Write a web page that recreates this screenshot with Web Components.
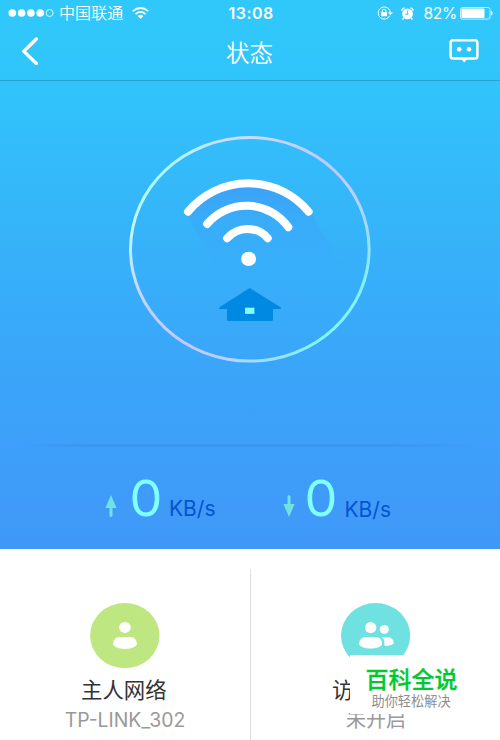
<!DOCTYPE html>
<html lang="zh-CN">
<head>
<meta charset="utf-8">
<title>状态</title>
<style>
body{margin:0;width:500px;height:740px;overflow:hidden;background:#fff;font-family:Inter,"Noto Sans CJK SC",sans-serif}
</style>
</head>
<body>
<router-app></router-app>
<script>
const define = (name, html) => customElements.define(name, class extends HTMLElement {
  constructor() {
    super();
    this.attachShadow({mode: 'open'}).innerHTML = html;
  }
});

define('status-bar', `
<style>
:host{display:grid;grid-template-columns:1fr 46px 1fr;height:26px;align-items:center;color:#fff;font-size:16px;line-height:26px;box-sizing:border-box;padding:0 7px 0 8px}
svg{display:block;flex:none}
.left,.right{display:flex;align-items:center;height:26px;white-space:nowrap}
.right{justify-content:flex-end}
.time{font-weight:600;font-size:16px;letter-spacing:.5px;text-align:center;white-space:nowrap;padding-left:1px}
.carrier{margin-left:5px;font-weight:350;letter-spacing:.1px}
.pct{font-size:15.6px;font-weight:400;margin:0 3px 0 9px;padding-top:1px;letter-spacing:-.3px}
</style>
<div class="left">
 <svg width="46" height="10" viewBox="0 0 46 10" fill="#fff"><circle cx="4.3" cy="5" r="3.8"/><circle cx="13.6" cy="5" r="3.8"/><circle cx="22.9" cy="5" r="3.8"/><circle cx="32.2" cy="5" r="3.8"/><circle cx="41.6" cy="5" r="3.5" fill="none" stroke="#fff" stroke-width=".8"/></svg>
 <span class="carrier">中国联通</span>
 <svg style="margin-left:8.5px" width="17" height="12" viewBox="0 0 17 12" fill="none" stroke="#fff" stroke-width="1.7"><path d="M.8 4.2Q8.5-2.2 16.2 4.2M3.5 7.1Q8.5 2.7 13.5 7.1"/><path d="M5.6 9Q8.5 6.4 11.4 9L8.5 11.7Z" fill="#fff" stroke="none"/></svg>
</div>
<div class="time">13:08</div>
<div class="right">
 <svg width="16" height="14" viewBox="0 0 16 14"><path d="M12.8 9.7A6.1 6.1 0 1 1 12.9 4.6L13.2 7.2" fill="none" stroke="#fff" stroke-width="1"/><path d="M10.9 6.6H16L13.4 9.1Z" fill="#fff"/><rect x="4.2" y="6.1" width="5.8" height="4.2" rx=".5" fill="#fff"/><path d="M5.3 6.5V5.1a1.8 1.8 0 0 1 3.6 0v1.4" fill="none" stroke="#fff" stroke-width="1"/></svg>
 <svg style="margin-left:8px" width="13" height="13" viewBox="0 0 13 13"><circle cx="6.5" cy="6.9" r="5.4" fill="#fff"/><path d="M.7 3.6A4 4 0 0 1 3.5.9M12.3 3.6A4 4 0 0 0 9.5.9M2.8 11.1 1.5 12.5M10.2 11.1l1.3 1.4" stroke="#fff" stroke-width="1.5" fill="none"/><path d="M6.7 3.7v3.6H4.2" fill="none" stroke="#30c5fa" stroke-width="1"/></svg>
 <span class="pct">82%</span>
 <svg width="33" height="13" viewBox="0 0 33 13"><rect x=".5" y=".5" width="29.5" height="11.6" rx="2" fill="none" stroke="#fff" stroke-width=".9" opacity=".85"/><rect x="1.5" y="1.5" width="23" height="9.6" rx="1" fill="#fff"/><path d="M31 4.1Q33 4.6 32.5 6.4Q32.4 8.1 31 8.5Z" fill="#fff"/></svg>
</div>`);

define('nav-bar', `
<style>
:host{display:flex;justify-content:space-between;align-items:center;height:55px;box-sizing:border-box;padding:0 20px 0 21px;border-bottom:1px solid #299fd2;color:#fff}
svg{display:block}
h1{margin:0 0 0 11px;padding-top:1px;font-weight:350;font-size:23.5px;line-height:30px}
.back{margin-top:-5px}.msg{margin-top:-5px}
</style>
<svg class="back" width="18" height="28" viewBox="0 0 18 28"><path d="M15.3 2 2.8 14.4 15.3 26.5" fill="none" stroke="#fff" stroke-width="3.4" stroke-linecap="round" stroke-linejoin="round"/></svg>
<h1><slot></slot></h1>
<svg class="msg" width="31" height="25" viewBox="0 0 31 25"><rect x="1.6" y="2.2" width="26.8" height="18.4" rx="2.6" fill="none" stroke="#fff" stroke-width="2.5"/><path d="M12.2 21h6l-3 3.4Z" fill="#fff"/><circle cx="10.2" cy="11.2" r="2.3" fill="#fff"/><circle cx="20" cy="11.2" r="2.3" fill="#fff"/></svg>`);

define('signal-dial', `
<style>
:host{display:grid;width:242px;height:227px}
.ring,svg{grid-area:1/1;width:242px;height:227px}
.ring{background:conic-gradient(#c9dcff 0deg,#c5ccfb 28deg,#c3c8fb 45deg,#c0cffd 62deg,#9edcff 82deg,#86edff 100deg,#80f5ff 125deg,#82f4ff 150deg,#9ae0ff 170deg,#b5d3ff 190deg,#c3c8fb 215deg,#c5cefa 240deg,#c5e3ff 260deg,#c0f6ff 280deg,#aef8fc 305deg,#b6f1ff 325deg,#c3e1ff 345deg,#c9dcff);
clip-path:path(evenodd,"M0 113.3A120.8 113.3 0 1 1 241.6 113.3A120.8 113.3 0 1 1 0 113.3ZM3 113.3A117.8 110.3 0 1 0 238.6 113.3A117.8 110.3 0 1 0 3 113.3Z")}
</style>
<div class="ring"></div>
<svg viewBox="129 136 242 227">
 <defs><linearGradient id="shade" x1="0" y1="185" x2="0" y2="278" gradientUnits="userSpaceOnUse"><stop offset="0" stop-color="#3c9ff9" stop-opacity=".9"/><stop offset=".35" stop-color="#3ba4f9" stop-opacity=".55"/><stop offset="1" stop-color="#3ca4f9" stop-opacity="0"/></linearGradient></defs>
 <path d="M186 213A78.2 78.2 0 0 1 311 213L352 285H226Z" fill="url(#shade)"/>
 <g fill="none" stroke="#fff" stroke-width="8" stroke-linecap="round"><path d="M188 211.7A78.2 78.2 0 0 1 308.6 211.7M207.2 223.9A51.5 51.5 0 0 1 288.3 227.2M227.2 238.2A26.8 26.8 0 0 1 267.7 238.2"/></g>
 <ellipse cx="248.6" cy="258.9" rx="7.5" ry="7.2" fill="#fff"/>
 <path d="M249.7 288 281 307.6Q281.5 309 280 309H273V319.5Q273 321 271.5 321H228.5Q227 321 227 319.5V309H220Q218.4 309 219 307.6Z" fill="#0089e2"/>
 <rect x="245" y="307.7" width="9.4" height="6.2" fill="#80fffb"/>
</svg>`);

define('speed-meter', `
<style>
:host{display:flex;align-items:flex-start;height:60px}
svg{margin-top:20px;flex:none}
:host([down]) svg{transform:rotate(180deg)}
b{font-weight:300;-webkit-text-stroke:1px #80fffb;font-size:49px;line-height:60px;color:#80fffb;width:32px;margin:-6.5px 0 0 12.5px;text-align:center;transform:scaleX(1.07)}
span{font-size:21px;line-height:26px;color:#0554cf;margin:20.5px 0 0 7.5px}
:host([down]) b{margin-left:10px}
:host([down]) span{margin-top:21.5px}
</style>
<svg width="12" height="22" viewBox="0 0 12 22"><path d="M6 0 11.6 13H7.5V20.5Q7.3 22 6 22Q4.7 22 4.5 20.5V13H.4Z" fill="#70e2e2"/></svg>
<b><slot></slot></b><span>KB/s</span>`);

define('network-tile', `
<style>
:host{display:flex;flex-direction:column;align-items:center;padding-top:54px;width:250px;box-sizing:border-box;white-space:nowrap}
.name{font-size:21.4px;line-height:30px;margin-top:6px;color:#333;width:88px}
.sub{font-size:19.4px;line-height:26px;margin-top:2px;color:#999}
</style>
<slot name="icon"></slot>
<div class="name"><slot name="name"></slot></div>
<div class="sub"><slot name="sub"></slot></div>`);

define('site-badge', `
<style>
:host{display:block;position:absolute;left:350px;top:655px;width:150px;height:59px;background:#fff;box-sizing:border-box;white-space:nowrap}
.t{font-weight:500;-webkit-text-stroke:.3px #00c92f;font-size:23px;line-height:28px;color:#00c92f;padding:11px 0 0 15.5px}
.s{font-size:13.2px;line-height:18px;color:#8d8d8d;padding:0 0 0 21.5px;margin-top:-2px}
</style>
<div class="t">百科全说</div><div class="s">助你轻松解决</div>`);

define('router-app', `
<style>
:host{display:block;position:relative;width:500px;height:740px;overflow:hidden}
.hero{height:549px;background:linear-gradient(#30c8fb 0,#30c5fa 80px,#33bcfa 150px,#3aa7f9 350px,#3f9bf9 500px,#3f98f8 549px);display:flex;flex-direction:column}
.dial{height:363px;display:flex;justify-content:center;padding-top:55px;box-sizing:border-box;flex:none}
.rule{height:3px;background:linear-gradient(90deg,#3797ee00 5%,#3797ee 17%,#3797ee 78%,#3797ee00 95%);opacity:.85;flex:none;filter:blur(.6px)}
.speeds{display:grid;grid-template-columns:178px 1fr;padding:28px 0 0 105px}
.tiles{display:flex;height:191px;background:#fff}
.sep{width:1px;margin:20px 0 0 0;background:#dedede;flex:none}
.guest{font-size:20px}
svg{display:block}
</style>
<div class="hero">
 <status-bar></status-bar>
 <nav-bar>状态</nav-bar>
 <div class="dial"><signal-dial></signal-dial></div>
 <div class="rule"></div>
 <div class="speeds"><speed-meter>0</speed-meter><speed-meter down>0</speed-meter></div>
</div>
<div class="tiles">
 <network-tile style="flex:none">
  <svg slot="icon" width="70" height="66" viewBox="0 0 70 66"><ellipse cx="34.8" cy="32.6" rx="34.7" ry="32.6" fill="#bee781"/><ellipse cx="34.9" cy="24.4" rx="5.8" ry="5.5" fill="#fff"/><path d="M30 34H40C44.5 34 47 37.5 46.8 41.3C46 44.3 40 46 35 46S24 44.3 23.1 41.3C22.9 37.5 25.5 34 30 34Z" fill="#fff"/></svg>
  <span slot="name">主人网络</span><span slot="sub">TP-LINK_302</span>
 </network-tile>
 <div class="sep"></div>
 <network-tile style="flex:none">
  <svg slot="icon" width="70" height="66" viewBox="0 0 70 66"><ellipse cx="34.6" cy="32.6" rx="34.6" ry="32.6" fill="#70e1e1"/><ellipse cx="29.7" cy="24.6" rx="5.7" ry="5.5" fill="#fff"/><path d="M40 34H46C50.5 34 53 37 52.6 40.5Q50.5 42.8 44 43Z" fill="#fff"/><path d="M25 34H34.5C39 34 41.3 37.5 41 41.3C40.2 44 34.9 45.6 29.7 45.6S18.9 44 18.1 41.3C17.9 37.5 20.5 34 25 34Z" fill="#fff"/><path d="M37.5 33.2C41.3 34.8 43.3 38.5 42 43.5" fill="none" stroke="#70e1e1" stroke-width="1.8"/><ellipse cx="43.3" cy="26.3" rx="4.6" ry="4.4" fill="#fff"/></svg>
  <span slot="name">访</span><span slot="sub" class="guest">未开启</span>
 </network-tile>
</div>
<site-badge></site-badge>`);
</script>
</body>
</html>
